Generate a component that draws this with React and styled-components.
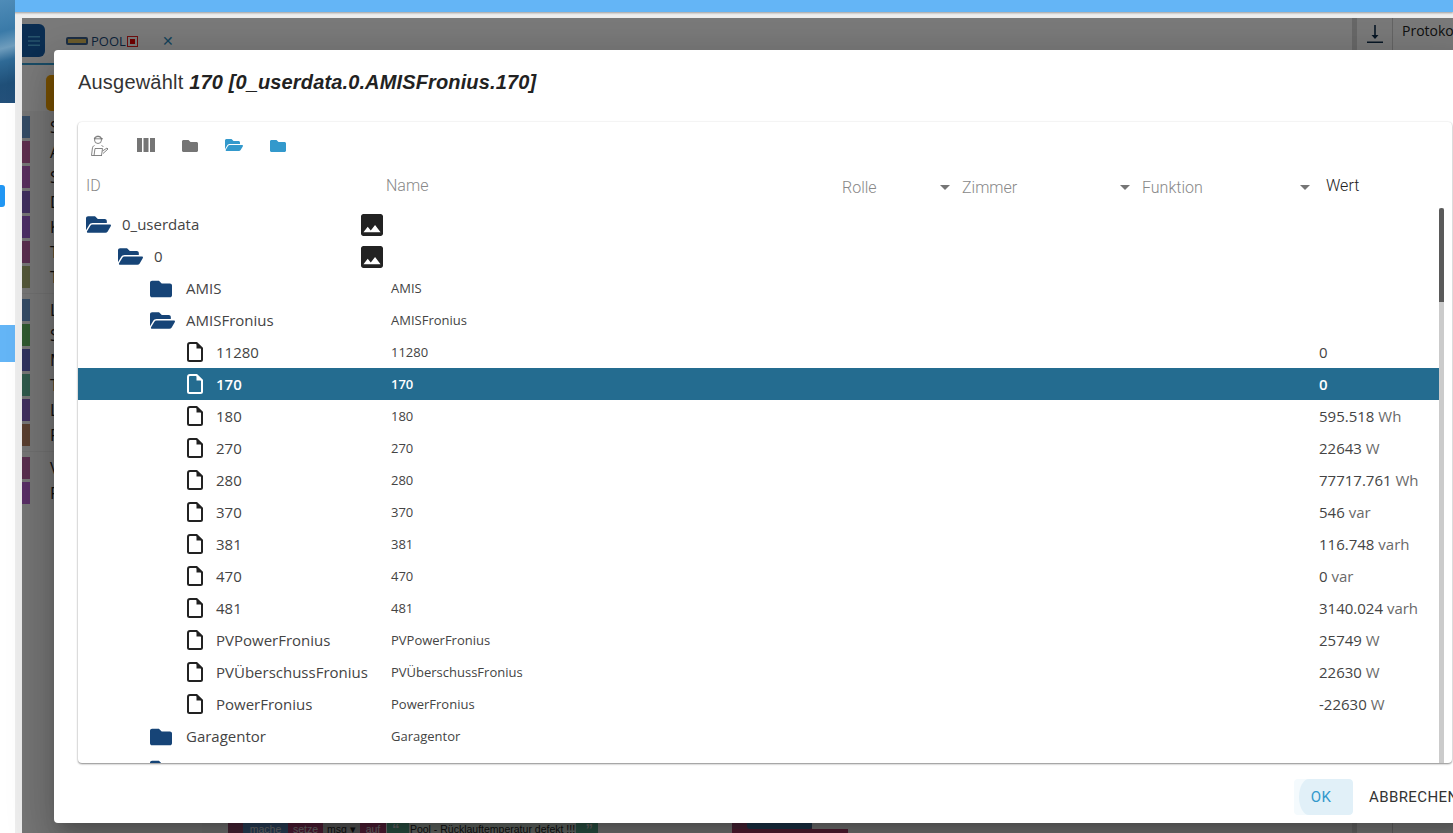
import React from 'react';
import styled, { createGlobalStyle } from 'styled-components';

const Global = createGlobalStyle`
  html, body { margin: 0; padding: 0; height: 100%; overflow: hidden; background: #fff; }
  * { box-sizing: border-box; }
  body { font-family: "Open Sans", "Liberation Sans", sans-serif; }
`;

const Page = styled.div`
  width: 1453px;
  height: 833px;
  position: relative;
  overflow: hidden;
  display: flex;
  flex-direction: column;
  background: #eee;
`;
const TopBar = styled.div`
  height: 12px;
  flex: none;
  background: #64b5f6;
  box-shadow: 0 1px 2px rgba(0,0,0,.35);
`;
const Body = styled.div`
  flex: 1;
  display: flex;
  min-height: 0;
`;
const Rail = styled.div`
  width: 15px;
  flex: none;
  background: #fff;
  margin-top: -12px;
  position: relative;
  z-index: 1;
  display: flex;
  flex-direction: column;
`;
const RailImage = styled.div`
  height: 103px;
  background: linear-gradient(165deg, #4f8cb8 0%, #3a7aa8 30%, #6f9dbd 46%, #2f6a96 58%, #1f4f78 80%, #24507a 100%);
`;
const RailTab = styled.div`
  height: ${p => p.$h}px;
  width: ${p => p.$w}px;
  margin-top: ${p => p.$top}px;
  background: ${p => p.$c};
  border-radius: 0 ${p => p.$r}px ${p => p.$r}px 0;
`;
const Gutter = styled.div`
  width: 7px;
  flex: none;
`;
const Workspace = styled.div`
  flex: 1;
  margin-top: 6px;
  background: #fff;
  display: flex;
  min-width: 0;
`;
const MainPane = styled.div`
  width: 1330px;
  flex: none;
  display: flex;
  flex-direction: column;
`;
const Resizer = styled.div`
  width: 5px;
  flex: none;
  background: #d0d0d0;
`;
const DownloadColumn = styled.div`
  width: 36px;
  flex: none;
  border-right: 1px solid #c8c8c8;
  background: #f2f2f2;
  display: flex;
  justify-content: center;
  padding-top: 7px;
`;
const LogPane = styled.div`
  flex: 1;
  padding: 3px 0 0 9px;
  background: #f5f5f5;
  color: #222;
  font-size: 14px;
  line-height: 19px;
  white-space: nowrap;
`;
const TabStrip = styled.div`
  height: 47px;
  flex: none;
  display: flex;
  align-items: flex-start;
  background: #f5f5f5;
  border-bottom: 2px solid #3399cc;
  color: #333;
`;
const MenuButton = styled.div`
  width: 23px;
  height: 33px;
  margin-top: 6px;
  background: #165ca4;
  border-radius: 0 6px 6px 0;
  display: flex;
  align-items: center;
  justify-content: center;
  flex: none;
`;
const TabLabel = styled.div`
  margin: 15px 0 0 21px;
  display: flex;
  align-items: center;
  font-size: 13px;
  line-height: 16px;
  color: #1d4a78;
`;
const TabClose = styled.div`
  margin: 13px 0 0 24px;
  font-size: 14px;
  color: #2a86b8;
`;
const Columns = styled.div`
  flex: 1;
  display: flex;
  min-height: 0;
`;
const BlockList = styled.div`
  width: 180px;
  flex: none;
  background: #ececec;
  display: flex;
  flex-direction: column;
`;
const OrangeSlot = styled.div`
  height: 46px;
  flex: none;
  padding: 10px 0 0 24px;
  background: #f5f5f5;
  &::before {
    content: "";
    display: block;
    width: 16px;
    height: 36px;
    background: #f0a000;
    border-radius: 5px 0 0 5px;
  }
`;
const GroupGap = styled.div`
  height: 8px;
  flex: none;
  padding-top: 3px;
  &::before {
    content: "";
    display: block;
    height: 1px;
    background: #e0e0e0;
  }
`;
const FirstGap = styled.div`
  height: 4px;
  flex: none;
`;
const CategoryRow = styled.div`
  height: 25px;
  flex: none;
  display: flex;
  align-items: flex-start;
  font-size: 16px;
  line-height: 25px;
  color: #222;
  &::before {
    content: "";
    width: 8px;
    height: 22px;
    margin-top: 1px;
    background: ${p => p.$c};
    margin-right: 20px;
  }
`;
const Canvas = styled.div`
  flex: 1;
  background: #e8e8e8;
  position: relative;
`;
const Blocks = styled.div`
  position: absolute;
  left: 26px;
  top: 754px;
  display: flex;
  height: 22px;
  font: 10.5px/20px "Liberation Sans", sans-serif;
  color: #ddd;
`;
const Block = styled.div`
  width: ${p => p.$w}px;
  flex: none;
  background: ${p => p.$c};
  text-align: center;
  white-space: nowrap;
`;
const BlockField = styled.div`
  width: ${p => p.$w}px;
  flex: none;
  height: 20px;
  background: ${p => p.$c};
  border-radius: 4px;
  color: #222;
  text-align: center;
  white-space: nowrap;
`;
const GreenBlock = styled.div`
  width: 211px;
  flex: none;
  margin-left: 1px;
  display: flex;
  justify-content: space-between;
  padding: 0 5px;
  background: #55a488;
`;
const QuoteMark = styled.span`
  font-size: 15px;
  font-weight: 700;
  color: #ccc;
`;
const SideBlock = styled.div`
  position: absolute;
  left: 530px;
  top: 750px;
  display: flex;
  flex-direction: column;
`;
const SideUpper = styled.div`
  width: 80px;
  height: 14px;
  padding-left: 15px;
  background: #94486e;
  &::before {
    content: "";
    display: block;
    height: 14px;
    width: 65px;
    background: #3c6a94;
    border-radius: 0 0 3px 3px;
  }
`;
const SideLower = styled.div`
  width: 116px;
  height: 10px;
  background: #a83c68;
`;

const Backdrop = styled.div`
  position: absolute;
  left: 22px;
  top: 18px;
  right: 0;
  bottom: 0;
  background: rgba(0,0,0,.5);
  z-index: 2;
`;
const Dialog = styled.div`
  position: absolute;
  left: 54px;
  top: 50px;
  width: 1420px;
  height: 773px;
  background: #fff;
  border-radius: 4px;
  box-shadow: 0 11px 15px -7px rgba(0,0,0,.2), 0 24px 38px 3px rgba(0,0,0,.14), 0 9px 46px 8px rgba(0,0,0,.12);
  z-index: 3;
  display: flex;
  flex-direction: column;
`;
const DialogTitle = styled.h2`
  margin: 0;
  height: 72px;
  flex: none;
  padding: 20px 24px 0;
  font: 400 20px/25px "Liberation Sans", sans-serif;
  color: #333;
  letter-spacing: .2px;
  b { font-weight: 700; font-style: italic; color: #222; letter-spacing: .14px; }
`;
const Panel = styled.div`
  height: 641px;
  width: 1374px;
  flex: none;
  margin-left: 24px;
  border-radius: 4px;
  box-shadow: 0 1px 2px rgba(0,0,0,.45), 0 0 2px rgba(0,0,0,.08);
  display: flex;
  flex-direction: column;
  overflow: hidden;
`;
const Toolbar = styled.div`
  height: 48px;
  flex: none;
  display: flex;
  align-items: center;
  padding: 0 0 2px 10px;
  gap: 22px;
`;
const ToolIcon = styled.div`
  width: 22px;
  height: 22px;
  flex: none;
  margin-right: ${p => p.$after || 0}px;
  display: flex;
  align-items: center;
  justify-content: center;
`;
const HeadRow = styled.div`
  height: 38px;
  flex: none;
  padding-bottom: 2px;
  display: flex;
  align-items: center;
  font: 300 16px/20px Roboto, "Liberation Sans", sans-serif;
  color: #888;
`;
const HeadCell = styled.div`
  width: ${p => p.$w}px;
  flex: none;
  padding-left: ${p => p.$pl || 0}px;
  padding-right: ${p => p.$pr || 12}px;
  margin-bottom: ${p => p.$up ? 4 : 0}px;
  display: flex;
  align-items: center;
  justify-content: space-between;
`;
const Caret = styled.span`
  width: 0;
  height: 0;
  margin-bottom: 2px;
  border-left: 5px solid transparent;
  border-right: 5px solid transparent;
  border-top: 5px solid #757575;
`;
const WertHead = styled.div`
  font-size: 16px;
  color: #222;
  margin-bottom: 4px;
`;
const TreeArea = styled.div`
  flex: 1;
  min-height: 0;
  display: flex;
  overflow: hidden;
`;
const Rows = styled.div`
  flex: 1;
  min-width: 0;
  overflow: hidden;
`;
const Row = styled.div`
  height: 32px;
  display: flex;
  align-items: center;
  background: ${p => p.$on ? '#246c90' : 'transparent'};
  color: ${p => p.$on ? '#fff' : '#444'};
  font-weight: ${p => p.$on ? 600 : 400};
`;
const IdCell = styled.div`
  width: 309px;
  flex: none;
  display: flex;
  align-items: center;
  padding-left: ${p => p.$indent}px;
  font-size: 15px;
  line-height: 20px;
  white-space: nowrap;
`;
const RowIcon = styled.span`
  width: 26px;
  height: 24px;
  flex: none;
  display: flex;
  align-items: center;
  justify-content: ${p => p.$file ? 'center' : 'flex-start'};
  margin-right: ${p => p.$file ? 8 : 10}px;
`;
const NameCell = styled.div`
  width: 928px;
  flex: none;
  padding-left: 4px;
  font-size: 13px;
  white-space: nowrap;
  display: flex;
  align-items: center;
`;
const ImageSlot = styled.span`
  margin: 2px 0 0 -30px;
  display: flex;
`;
const ValueCell = styled.div`
  flex: 1;
  padding-left: 4px;
  font-size: 15px;
  white-space: nowrap;
  span { opacity: .8; }
`;
const Track = styled.div`
  width: 5px;
  flex: none;
  background: #cbcbcb;
  margin-right: 8px;
  position: relative;
`;
const Thumb = styled.div`
  position: absolute;
  top: 0;
  left: 0;
  right: 0;
  height: 94px;
  border-radius: 3px 3px 0 0;
  background: #5a5a5a;
`;
const Actions = styled.div`
  flex: 1;
  display: flex;
  align-items: flex-start;
  padding: 16px 0 0 1240px;
  gap: 16px;
`;
const OkButton = styled.div`
  width: 59px;
  height: 36px;
  flex: none;
  padding-right: 5px;
  border-radius: 4px;
  background: #f4fafd;
  position: relative;
  overflow: hidden;
  color: #3399cc;
  font: 400 15px/36px Roboto, "Liberation Sans", sans-serif;
  text-align: center;
  letter-spacing: .4px;
  &::before {
    content: "";
    position: absolute;
    top: 0;
    bottom: 0;
    left: 5px;
    right: 0;
    background: #e1f0f8;
    border-radius: 10px 4px 4px 10px / 18px 4px 4px 18px;
  }
  span { position: relative; }
`;
const CancelButton = styled.div`
  flex: none;
  color: #333;
  font: 400 15px/36px Roboto, "Liberation Sans", sans-serif;
  letter-spacing: .4px;
  white-space: nowrap;
`;

const FolderClosed = ({ color = '#164477', width = 22 }) => (
  <svg width={width} height={width * 0.875} viewBox="0 0 512 448"><path fill={color} d="M464 128H272l-64-64H48C21.49 64 0 85.49 0 112v288c0 26.51 21.49 48 48 48h416c26.51 0 48-21.49 48-48V176c0-26.51-21.49-48-48-48z" /></svg>
);
const FolderOpen = ({ color = '#164477', size = 25 }) => (
  <svg width={size} height={size} viewBox="0 0 576 512"><path fill={color} d="M572.694 292.093L500.27 416.248A63.997 63.997 0 0 1 444.989 448H45.025c-18.523 0-30.064-20.093-20.731-36.093l72.424-124.155A64 64 0 0 1 152 256h399.964c18.523 0 30.064 20.093 20.73 36.093zM152 224h328v-48c0-26.51-21.49-48-48-48H272l-64-64H48C21.49 64 0 85.49 0 112v278.046l69.077-118.418C86.214 242.25 117.989 224 152 224z" /></svg>
);
const FileIcon = ({ color = '#222' }) => (
  <svg width="16" height="20" viewBox="0 0 16 20"><path fill="none" stroke={color} strokeWidth="2" strokeLinejoin="round" d="M3 1h6.600L15 6.200V17.500a1.500 1.500 0 0 1-1.500 1.500H2.500A1.500 1.500 0 0 1 1 17.500V3a2 2 0 0 1 2-2z" /><path fill={color} d="M9.500 1l5.500 5.500H9.500z" /></svg>
);
const ImageIcon = () => (
  <svg width="22" height="22" viewBox="3 3 18 18"><path fill="#222" d="M21 19V5c0-1.100-.9-2-2-2H5c-1.100 0-2 .9-2 2v14c0 1.100.9 2 2 2h14c1.100 0 2-.9 2-2zM8.500 13.500l2.500 3.010L14.500 12l4.500 6H5l3.500-4.500z" /></svg>
);
const ExpertIcon = () => (
  <svg width="22" height="24" viewBox="0 0 22 24" fill="none" stroke="#666" strokeWidth=".8"><circle cx="10" cy="7" r="3.500" /><path d="M6.300 5.800C6.500 2.500 13 2 13.700 5.800M6 5.800h9" /><path d="M6.500 12.500C5 13 4.500 14 4.300 16L3.500 22.500H14" /><path d="M13.500 12.500c1 .3 1.500.7 1.800 1.300" /><path d="M7 15.500h7.500l-1 7M7 15.500l-1 7" /><path d="M14.500 18l4.500-3 1 1-5 4.500" /></svg>
);
const ColumnsIcon = () => (
  <svg width="18" height="14" viewBox="0 0 18 14"><path fill="#757575" d="M0 0h5v14H0zM6.500 0h5v14h-5zM13 0h5v14h-5z" /></svg>
);
const DownloadIcon = () => (
  <svg width="16" height="18" viewBox="0 0 16 18"><path fill="#0e2c4a" d="M7.200 0h1.600v11h-1.600zM4.500 10h7L8 14zM0 16.500h16V18H0z" /></svg>
);
const MenuIcon = () => (
  <svg width="14" height="12" viewBox="0 0 14 12"><path fill="#4fa8d8" d="M1 1h12v1.500H1zM1 5.200h12v1.500H1zM1 9.500h12V11H1z" /></svg>
);
const TabBadge = styled.span`
  width: 22px;
  height: 8px;
  margin-right: 3px;
  background: #d8b95a;
  border: 2px solid #3a5f8a;
  border-radius: 2px;
`;
const StopBadge = styled.span`
  width: 11px;
  height: 11px;
  margin-left: 1px;
  border: 1px solid #e02020;
  display: flex;
  align-items: center;
  justify-content: center;
  &::before { content: ""; width: 5px; height: 5px; background: #e00000; }
`;

const groupOne = [
  ['#6a99cc', 'S'], ['#be5e9e', 'A'], ['#b45ebe', 'S'], ['#8260be', 'D'], ['#9a5ecc', 'K'], ['#b45e9e', 'T'], ['#a8b074', 'T'],
];
const groupTwo = [
  ['#6a99cc', 'L'], ['#60b460', 'S'], ['#6066be', 'M'], ['#5eb498', 'T'], ['#8260be', 'L'], ['#b47e60', 'F'],
];
const groupThree = [['#b45e9e', 'V'], ['#b45ecc', 'F']];

const rows = [
  { id: '0_userdata', kind: 'open', indent: 8, image: true },
  { id: '0', kind: 'open', indent: 40, image: true },
  { id: 'AMIS', name: 'AMIS', kind: 'folder', indent: 72 },
  { id: 'AMISFronius', name: 'AMISFronius', kind: 'open', indent: 72 },
  { id: '11280', name: '11280', kind: 'file', value: '0' },
  { id: '170', name: '170', kind: 'file', value: '0', on: true },
  { id: '180', name: '180', kind: 'file', value: '595.518', unit: 'Wh' },
  { id: '270', name: '270', kind: 'file', value: '22643', unit: 'W' },
  { id: '280', name: '280', kind: 'file', value: '77717.761', unit: 'Wh' },
  { id: '370', name: '370', kind: 'file', value: '546', unit: 'var' },
  { id: '381', name: '381', kind: 'file', value: '116.748', unit: 'varh' },
  { id: '470', name: '470', kind: 'file', value: '0', unit: 'var' },
  { id: '481', name: '481', kind: 'file', value: '3140.024', unit: 'varh' },
  { id: 'PVPowerFronius', name: 'PVPowerFronius', kind: 'file', value: '25749', unit: 'W' },
  { id: 'PVÜberschussFronius', name: 'PVÜberschussFronius', kind: 'file', value: '22630', unit: 'W' },
  { id: 'PowerFronius', name: 'PowerFronius', kind: 'file', value: '-22630', unit: 'W' },
  { id: 'Garagentor', name: 'Garagentor', kind: 'folder', indent: 72 },
  { id: '', name: '', kind: 'folder', indent: 72 },
];

const TreeRow = ({ row }) => {
  const file = row.kind === 'file';
  return (
    <Row $on={row.on}>
      <IdCell $indent={file ? 104 : row.indent}>
        <RowIcon $file={file}>
          {file && <FileIcon color={row.on ? '#fff' : '#222'} />}
          {row.kind === 'open' && <FolderOpen />}
          {row.kind === 'folder' && <FolderClosed />}
        </RowIcon>
        {row.id}
      </IdCell>
      <NameCell>
        {row.image && <ImageSlot><ImageIcon /></ImageSlot>}
        {row.name}
      </NameCell>
      <ValueCell>
        {row.value}{row.unit && <span> {row.unit}</span>}
      </ValueCell>
    </Row>
  );
};

export default function App() {
  return (
    <Page>
      <Global />
      <TopBar />
      <Body>
        <Rail>
          <RailImage />
          <RailTab $h={22} $w={5} $top={82} $c="#2196f3" $r={3} />
          <RailTab $h={37} $w={15} $top={118} $c="#64b5f6" $r={0} />
        </Rail>
        <Gutter />
        <Workspace>
          <MainPane>
            <TabStrip>
              <MenuButton><MenuIcon /></MenuButton>
              <TabLabel><TabBadge />POOL<StopBadge /></TabLabel>
              <TabClose>✕</TabClose>
            </TabStrip>
            <Columns>
              <BlockList>
                <OrangeSlot />
                <FirstGap />
                {groupOne.map(([c, t], i) => <CategoryRow key={i} $c={c}>{t}</CategoryRow>)}
                <GroupGap />
                {groupTwo.map(([c, t], i) => <CategoryRow key={i} $c={c}>{t}</CategoryRow>)}
                <GroupGap />
                {groupThree.map(([c, t], i) => <CategoryRow key={i} $c={c}>{t}</CategoryRow>)}
              </BlockList>
              <Canvas>
                <Blocks>
                  <Block $w={15} $c="#94486e" />
                  <Block $w={45} $c="#5480b0">mache</Block>
                  <Block $w={35} $c="#a03c6c">setze</Block>
                  <BlockField $w={37} $c="#b0b0b0">msg ▾</BlockField>
                  <Block $w={26} $c="#a03c6c">auf</Block>
                  <GreenBlock>
                    <QuoteMark>“</QuoteMark>
                    <BlockField $w={167} $c="#c8d4cc">Pool - Rücklauftemperatur defekt !!!</BlockField>
                    <QuoteMark>”</QuoteMark>
                  </GreenBlock>
                </Blocks>
                <SideBlock>
                  <SideUpper />
                  <SideLower />
                </SideBlock>
              </Canvas>
            </Columns>
          </MainPane>
          <Resizer />
          <DownloadColumn><DownloadIcon /></DownloadColumn>
          <LogPane>Protokoll</LogPane>
        </Workspace>
      </Body>
      <Backdrop />
      <Dialog>
        <DialogTitle>Ausgewählt <b>170 [0_userdata.0.AMISFronius.170]</b></DialogTitle>
        <Panel>
          <Toolbar>
            <ToolIcon $after={3}><ExpertIcon /></ToolIcon>
            <ToolIcon><ColumnsIcon /></ToolIcon>
            <ToolIcon><FolderClosed color="#757575" width={16} /></ToolIcon>
            <ToolIcon><FolderOpen color="#3399cc" size={18} /></ToolIcon>
            <ToolIcon><FolderClosed color="#3399cc" width={16} /></ToolIcon>
          </Toolbar>
          <HeadRow>
            <HeadCell $w={300} $pl={8} $up>ID</HeadCell>
            <HeadCell $w={464} $pl={8} $up>Name</HeadCell>
            <HeadCell $w={120}>Rolle<Caret /></HeadCell>
            <HeadCell $w={180}>Zimmer<Caret /></HeadCell>
            <HeadCell $w={184} $pr={16}>Funktion<Caret /></HeadCell>
            <WertHead>Wert</WertHead>
          </HeadRow>
          <TreeArea>
            <Rows>{rows.map((row, i) => <TreeRow key={i} row={row} />)}</Rows>
            <Track><Thumb /></Track>
          </TreeArea>
        </Panel>
        <Actions>
          <OkButton><span>OK</span></OkButton>
          <CancelButton>ABBRECHEN</CancelButton>
        </Actions>
      </Dialog>
    </Page>
  );
}
